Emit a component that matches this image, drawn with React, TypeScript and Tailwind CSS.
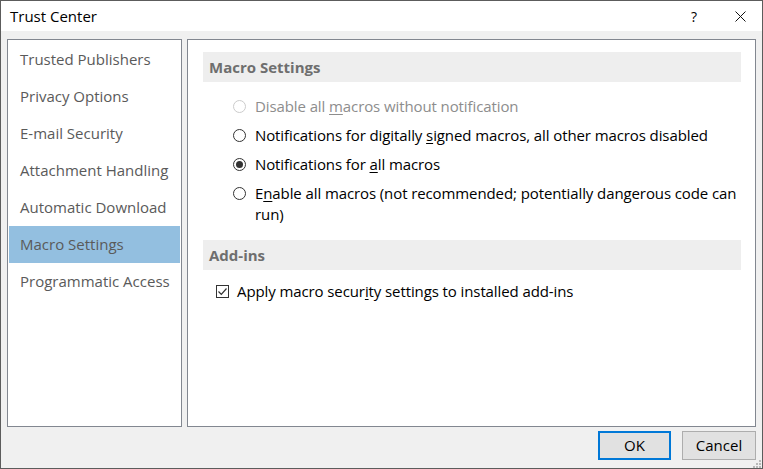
import React from "react";

const nav = [
  "Trusted Publishers",
  "Privacy Options",
  "E-mail Security",
  "Attachment Handling",
  "Automatic Download",
  "Macro Settings",
  "Programmatic Access",
];

function Radio({ checked, disabled }: { checked?: boolean; disabled?: boolean }) {
  return (
    <span
      className={`w-[13px] h-[13px] rounded-full border flex items-center justify-center shrink-0 bg-white ${
        disabled ? "border-[#cccccc]" : "border-[#333333]"
      }`}
    >
      {checked && <span className="w-[7px] h-[7px] rounded-full bg-[#333333]" />}
    </span>
  );
}

export default function App() {
  return (
    <div
      className="w-[763px] h-[469px] flex flex-col border border-[#5c5c5c] bg-[#f0f0f0] text-[15px]"
      style={{ fontFamily: '"Open Sans", "Noto Sans", sans-serif' }}
    >
      {/* title bar */}
      <div className="h-[30px] bg-white flex items-center shrink-0">
        <span className="pl-[9px] text-black">Trust Center</span>
        <span className="ml-auto mr-[38px] text-[14px] text-black">?</span>
        <svg width="11" height="11" viewBox="0 0 11 11" className="mr-[16px]">
          <path d="M0.5 0.5 L10.5 10.5 M10.5 0.5 L0.5 10.5" stroke="#111" strokeWidth="1" />
        </svg>
      </div>

      <div className="flex-1 flex flex-col px-[6px] pt-[8px]">
        <div className="flex gap-[5px] h-[388px]">
          {/* left list */}
          <div className="w-[175px] border border-[#828790] bg-white p-[1px]">
            {nav.map((n) => (
              <div
                key={n}
                className={`h-[37px] flex items-center pl-[11px] text-[#5a5a5a] ${
                  n === "Macro Settings" ? "bg-[#93bfe0]" : ""
                }`}
              >
                {n}
              </div>
            ))}
          </div>

          {/* right pane */}
          <div className="flex-1 border border-[#828790] bg-white pt-[12px] pl-[15px] pr-[14px]">
            <div className="h-[30px] bg-[#eeeeee] flex items-center pl-[6px] font-bold text-[#6e6e6e]">
              Macro Settings
            </div>
            <div className="flex flex-col gap-[8px] pt-[14px] pl-[30px] mr-[-12px] leading-[21px] tracking-[-0.1px]">
              <div className="flex items-center gap-[9px] text-[#8d8d8d]">
                <Radio disabled />
                <span>
                  Disable all <u className="underline-offset-2">m</u>acros without notification
                </span>
              </div>
              <div className="flex items-center gap-[9px] text-black">
                <Radio />
                <span>
                  Notifications for digitally <u className="underline-offset-2">s</u>igned macros, all other macros disabled
                </span>
              </div>
              <div className="flex items-center gap-[9px] text-black">
                <Radio checked />
                <span>
                  Notifications for <u className="underline-offset-2">a</u>ll macros
                </span>
              </div>
              <div className="flex items-start gap-[9px] text-black">
                <span className="mt-[4px]">
                  <Radio />
                </span>
                <span>
                  E<u className="underline-offset-2">n</u>able all macros (not recommended; potentially dangerous code can run)
                </span>
              </div>
            </div>

            <div className="mt-[15px] h-[30px] bg-[#eeeeee] flex items-center pl-[6px] font-bold text-[#6e6e6e]">
              Add-ins
            </div>
            <div className="flex items-center gap-[8px] pt-[11px] pl-[13px] text-black leading-[21px] tracking-[-0.1px]">
              <span className="w-[13px] h-[13px] border border-[#333333] bg-white flex items-center justify-center">
                <svg width="11" height="11" viewBox="0 0 11 11">
                  <path d="M1.5 5.5 L4.3 8.3 L9.5 2.5" stroke="#333" strokeWidth="1.2" fill="none" />
                </svg>
              </span>
              <span>
                Apply macro secur<u className="underline-offset-2">i</u>ty settings to installed add-ins
              </span>
            </div>
          </div>
        </div>

        {/* buttons */}
        <div className="flex justify-end gap-[11px] pt-[4px] relative">
          <button className="w-[73px] h-[29px] border-2 border-[#0078d7] bg-[#e1e1e1] text-black">OK</button>
          <button className="w-[74px] h-[29px] border border-[#adadad] bg-[#e1e1e1] text-black">Cancel</button>
          <svg width="8" height="8" viewBox="0 0 8 8" className="absolute right-[-5px] bottom-[-8px]">
            <rect x="6" y="0" width="2" height="2" fill="#b8b8b8" />
            <rect x="3" y="3" width="2" height="2" fill="#b8b8b8" />
            <rect x="6" y="3" width="2" height="2" fill="#b8b8b8" />
            <rect x="0" y="6" width="2" height="2" fill="#b8b8b8" />
            <rect x="3" y="6" width="2" height="2" fill="#b8b8b8" />
            <rect x="6" y="6" width="2" height="2" fill="#b8b8b8" />
          </svg>
        </div>
      </div>
    </div>
  );
}
